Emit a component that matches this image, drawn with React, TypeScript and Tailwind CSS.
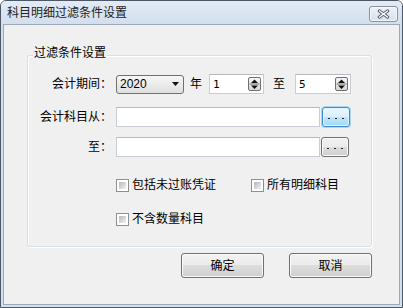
import React from "react";

function SpinBtn() {
  return (
    <div className="w-[13px] h-[14px] border border-[#6f6f6f] rounded-[2px] bg-gradient-to-b from-[#f6f6f6] to-[#d8d8d8] flex items-center justify-center">
      <svg width="11" height="12" viewBox="0 0 11 12">
        <polygon points="2,5 5.5,1.5 9,5" fill="#111" />
        <line x1="0.5" y1="6" x2="10.5" y2="6" stroke="#777" strokeWidth="1" />
        <polygon points="2,7.5 9,7.5 5.5,11" fill="#111" />
      </svg>
    </div>
  );
}

function Spin({ value, w }: { value: string; w: string }) {
  return (
    <div
      className={`${w} h-[20px] border border-[#c9ced6] border-t-[#b5b9c0] bg-white flex items-center justify-between pl-[3px] pr-[2px]`}
    >
      <span className="font-['DejaVu_Sans_Mono',monospace] text-[11px] leading-none">{value}</span>
      <SpinBtn />
    </div>
  );
}

function Dots() {
  return (
    <div className="flex gap-[5px] mt-[3px]">
      <div className="w-[2px] h-[1px] bg-[#222]" />
      <div className="w-[2px] h-[1px] bg-[#222]" />
      <div className="w-[2px] h-[1px] bg-[#222]" />
    </div>
  );
}

function Check({ label }: { label: string }) {
  return (
    <div className="flex items-center">
      <div className="w-[13px] h-[13px] border border-[#8e8f8f] bg-white p-[2px]">
        <div className="w-full h-full bg-gradient-to-br from-[#b3b8bf] to-[#f1f2f3]" />
      </div>
      <span className="ml-[3px] leading-[14px]">{label}</span>
    </div>
  );
}

function Btn({ label }: { label: string }) {
  return (
    <div className="w-[83px] h-[25px] border border-[#707070] rounded-[3px] shadow-[inset_0_0_0_1px_#fbfbfb] bg-[linear-gradient(#f2f2f2_0%,#ebebeb_50%,#dddddd_50%,#cfcfcf_100%)] flex items-center justify-center">
      <span className="leading-none">{label}</span>
    </div>
  );
}

export default function App() {
  return (
    <div className="w-[403px] h-[308px] bg-[#d3dfee] border border-[#4d5866] rounded-t-[6px] flex flex-col font-['Liberation_Sans','Noto_Sans_CJK_SC',sans-serif] text-[12px] text-black">
      <div className="h-[23px] flex items-center justify-between pl-[6px] pr-[4px] bg-gradient-to-b from-[#e2eaf5] to-[#d3dfee] rounded-t-[5px]">
        <span className="text-[12px] text-[#222] leading-none">科目明细过滤条件设置</span>
        <div className="w-[29px] h-[16px] mt-[3px] border border-[#8792a2] rounded-[3px] bg-gradient-to-b from-[#eef3f9] to-[#d6e0ec] shadow-[inset_0_0_0_1px_#f5f8fb] flex items-center justify-center">
          <svg width="13" height="10" viewBox="0 0 13 10">
            <line x1="2.5" y1="2" x2="10.5" y2="8" stroke="#55606e" strokeWidth="3.4" strokeLinecap="round" />
            <line x1="10.5" y1="2" x2="2.5" y2="8" stroke="#55606e" strokeWidth="3.4" strokeLinecap="round" />
            <line x1="2.5" y1="2" x2="10.5" y2="8" stroke="#fff" strokeWidth="1.4" strokeLinecap="round" />
            <line x1="10.5" y1="2" x2="2.5" y2="8" stroke="#fff" strokeWidth="1.4" strokeLinecap="round" />
          </svg>
        </div>
      </div>
      <div className="flex-1 mx-[2px] mb-[2px] border border-[#9ba8b7] bg-[#f0f0f0]">
        <div className="ml-[23px] mt-[30px] w-[345px]">
          <div className="relative h-[192px] border border-[#d5dfe5] rounded-[3px] shadow-[1px_1px_0_#ffffff,inset_1px_1px_0_#ffffff] pt-[18px]">
            <span className="absolute left-[5px] -top-[10px] px-[1px] bg-[#f0f0f0] leading-[14px]">过滤条件设置</span>

            <div className="flex items-center h-[20px]">
              <div className="w-[84px] text-right leading-[14px]">会计期间：</div>
              <div className="ml-[4px] w-[68px] h-[19px] border border-[#707070] rounded-[3px] bg-gradient-to-b from-[#f6f6f6] to-[#e0e0e0] flex items-center justify-between pl-[3px] pr-[4px]">
                <span className="leading-none">2020</span>
                <svg width="7" height="4" viewBox="0 0 7 4">
                  <polygon points="0,0 7,0 3.5,4" fill="#111" />
                </svg>
              </div>
              <span className="ml-[6px] leading-[14px]">年</span>
              <div className="ml-[7px]">
                <Spin value="1" w="w-[55px]" />
              </div>
              <span className="ml-[9px] leading-[14px]">至</span>
              <div className="ml-[10px]">
                <Spin value="5" w="w-[56px]" />
              </div>
            </div>

            <div className="flex items-center h-[20px] mt-[13px]">
              <div className="w-[84px] text-right leading-[14px]">会计科目从：</div>
              <div className="ml-[4px] w-[204px] h-[20px] border border-[#c9ced6] border-t-[#b5b9c0] bg-white" />
              <div className="ml-[2px] w-[28px] h-[20px] border border-[#3c8bd0] rounded-[3px] shadow-[0_0_0_1px_#a8daf7,inset_0_0_0_1px_#e6f5fd] bg-[linear-gradient(#e8f6fd_0%,#d9f0fc_50%,#bee6fd_50%,#a7d9f5_100%)] flex items-center justify-center">
                <Dots />
              </div>
            </div>

            <div className="flex items-center h-[20px] mt-[10px]">
              <div className="w-[84px] text-right leading-[14px]">至：</div>
              <div className="ml-[4px] w-[204px] h-[20px] border border-[#c9ced6] border-t-[#b5b9c0] bg-white" />
              <div className="ml-[1px] w-[28px] h-[20px] border border-[#707070] rounded-[3px] shadow-[inset_0_0_0_1px_#fbfbfb] bg-[linear-gradient(#f2f2f2_0%,#ebebeb_50%,#dddddd_50%,#cfcfcf_100%)] flex items-center justify-center">
                <Dots />
              </div>
            </div>

            <div className="flex mt-[21px] ml-[88px]">
              <div className="w-[135px]">
                <Check label="包括未过账凭证" />
              </div>
              <Check label="所有明细科目" />
            </div>
            <div className="flex mt-[20px] ml-[88px]">
              <Check label="不含数量科目" />
            </div>
          </div>

          <div className="flex justify-end gap-[25px] mt-[6px]">
            <Btn label="确定" />
            <Btn label="取消" />
          </div>
        </div>
      </div>
    </div>
  );
}
